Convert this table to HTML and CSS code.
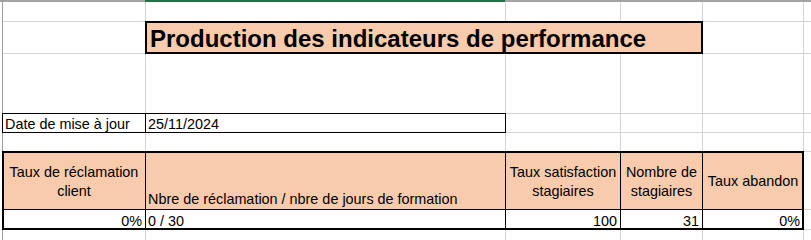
FILE: index.html
```html
<!DOCTYPE html>
<html lang="fr">

<head>
    <meta charset="UTF-8">
    <meta name="viewport" content="width=device-width, initial-scale=1.0">
    <title>Indicateurs de performance</title>

    <link rel="stylesheet" href="styles.css">

</head>

<body>
    <div id="colbar">
        <span class="edge"></span>
        <span class="selected"></span>
        <span class="rest"></span>
    </div>

    <div id="sheet">
        <!-- ligne 1 -->
        <div class="cell"></div>
        <div class="cell"></div>
        <div class="cell"></div>
        <div class="cell"></div>
        <div class="cell"></div>
        <div class="cell"></div>

        <!-- ligne 2 : titre fusionné B:D -->
        <div class="cell"></div>
        <div class="cell title">Production des indicateurs de performance</div>
        <div class="cell"></div>
        <div class="cell"></div>

        <!-- ligne 3 -->
        <div class="cell"></div>
        <div class="cell"></div>
        <div class="cell"></div>
        <div class="cell"></div>
        <div class="cell"></div>
        <div class="cell"></div>

        <!-- ligne 4 -->
        <div class="cell box">Date de mise à jour</div>
        <div class="cell box">25/11/2024</div>
        <div class="cell"></div>
        <div class="cell"></div>
        <div class="cell"></div>
        <div class="cell"></div>

        <!-- ligne 5 -->
        <div class="cell"></div>
        <div class="cell"></div>
        <div class="cell"></div>
        <div class="cell"></div>
        <div class="cell"></div>
        <div class="cell"></div>

        <!-- ligne 6 : entêtes -->
        <div class="cell hd first">Taux de réclamation client</div>
        <div class="cell hd low">Nbre de réclamation / nbre de jours de formation</div>
        <div class="cell hd">Taux satisfaction stagiaires</div>
        <div class="cell hd">Nombre de stagiaires</div>
        <div class="cell hd last">Taux abandon</div>
        <div class="cell"></div>

        <!-- ligne 7 : valeurs -->
        <div class="cell val first num">0%</div>
        <div class="cell val">0 / 30</div>
        <div class="cell val num">100</div>
        <div class="cell val num">31</div>
        <div class="cell val last num">0%</div>
        <div class="cell"></div>

        <!-- ligne 8 -->
        <div class="cell"></div>
        <div class="cell"></div>
        <div class="cell"></div>
        <div class="cell"></div>
        <div class="cell"></div>
        <div class="cell"></div>
    </div>
</body>

</html>
```

FILE: styles.css
```css
body {
    margin: 0;
    background: #fff;
    font-family: "Liberation Sans", Arial, sans-serif;
    font-size: 14.4px;
    color: #000;
    overflow: hidden;
}

/* bas des entêtes de colonnes, colonne B sélectionnée */
#colbar {
    display: flex;
    height: 2px;
}

#colbar .edge {
    width: 145px;
    background: #a3a3a3;
}

#colbar .selected {
    width: 360px;
    background: #217346;
}

#colbar .rest {
    flex: 1;
    background: #a3a3a3;
}

/* la grille : le fond gris passe dans les gaps = quadrillage */
#sheet {
    display: grid;
    grid-template-columns: 142px 359px 114px 81px 100px 1fr;
    grid-template-rows: 19px 31px 59px 18px 18px 57px 19px 1fr;
    gap: 1px;
    height: 238px;
    margin-left: 2px;
    border-left: 1px solid #9e9e9e;
    background: #d4d4d4;
}

.cell {
    display: flex;
    align-items: flex-end;
    padding: 0 2px;
    line-height: 16px;
    white-space: nowrap;
    background: #fff;
    min-width: 0;
}

.title {
    grid-column: 2 / span 3;
    padding: 0 0 1px 4px;
    font-size: 24px;
    line-height: 26px;
    font-weight: 700;
    background: #f8cbad;
    box-shadow: 0 0 0 1px #000, inset 0 0 0 1px #000;
}

.box {
    box-shadow: 0 0 0 1px #000;
}

.hd {
    align-items: center;
    justify-content: center;
    text-align: center;
    padding: 2px 1px 0;
    line-height: 19px;
    white-space: normal;
    background: #f8cbad;
    box-shadow: 0 0 0 1px #000, inset 0 1px #000;
}

.hd.low {
    align-items: flex-end;
    justify-content: flex-start;
    text-align: left;
    padding: 0 2px 2px;
    line-height: 16px;
    white-space: nowrap;
}

.hd.first {
    box-shadow: 0 0 0 1px #000, inset 0 1px #000, inset 1px 0 #000;
}

.hd.last {
    box-shadow: 0 0 0 1px #000, inset 0 1px #000, inset -1px 0 #000;
}

.val {
    box-shadow: 0 0 0 1px #000, inset 0 -1px #000;
}

.val.first {
    box-shadow: 0 0 0 1px #000, inset 0 -1px #000, inset 1px 0 #000;
}

.val.last {
    box-shadow: 0 0 0 1px #000, inset 0 -1px #000, inset -1px 0 #000;
}

.num {
    justify-content: flex-end;
    padding-right: 3px;
}
```
